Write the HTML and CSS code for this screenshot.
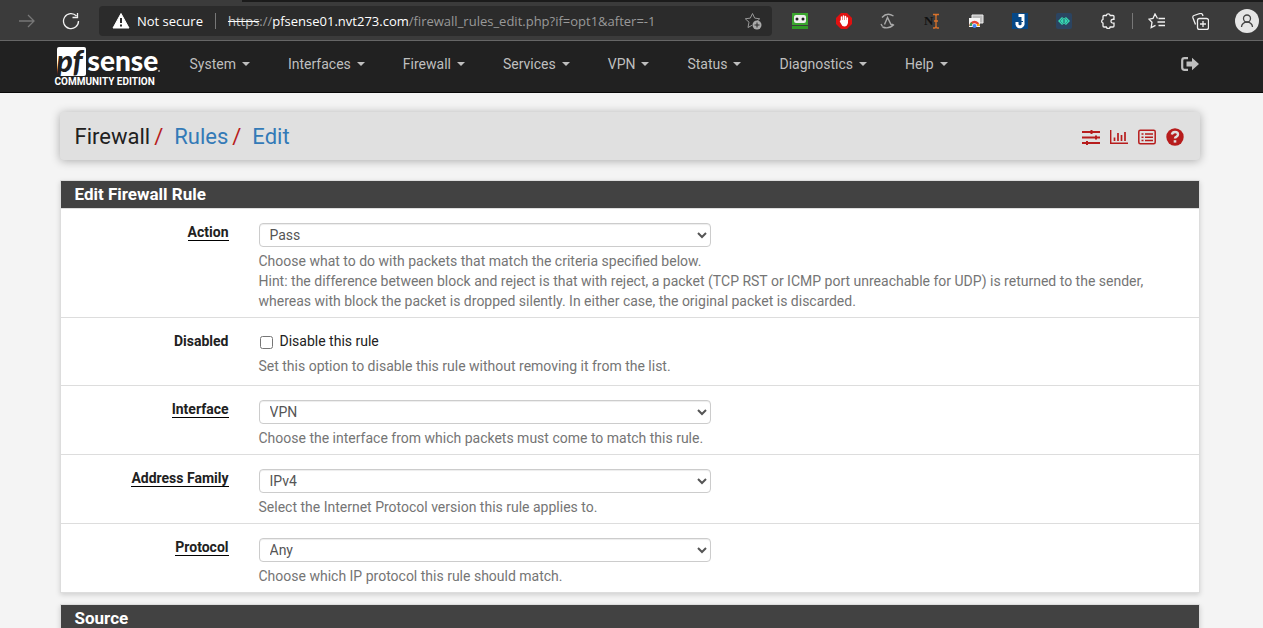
FILE: index.html
```html
<!DOCTYPE html>
<html lang="en">
<head>
<meta charset="utf-8">
<title>Firewall: Rules: Edit</title>
<link rel="stylesheet" href="styles.css">
</head>
<body>
<div class="browser">
  <div class="tab-strip"><span class="tab-edge"></span></div>
  <div class="toolbar">
    <button class="tool" aria-label="Forward"><svg class="ico dim" width="18" height="18" viewBox="0 0 18 18"><path d="M1 9h15M10 3l6 6-6 6"/></svg></button>
    <button class="tool reload" aria-label="Reload"><svg class="ico" width="18" height="18" viewBox="0 0 18 18"><path d="M14.500 4A7.500 7.500 0 1 0 16.500 9M15.500 1v4.500h-5"/></svg></button>
    <div class="address">
      <button class="security"><svg width="18" height="16" viewBox="0 0 18 16"><path d="M9 0.500 17 15H1z" fill="#fff" stroke="#fff" stroke-linejoin="round"/><path d="M9 5v5M9 11.500v2" stroke="#2b2b2b" stroke-width="2"/></svg>Not secure</button>
      <span class="divider"></span>
      <span class="url"><s>https</s>://<b>pfsense01.nvt273.com</b>/firewall_rules_edit.php?if=opt1&amp;after=-1</span>
      <button class="tool fav" aria-label="Add to favorites"><svg width="18" height="18" viewBox="0 0 18 18"><path d="M8.500 1.500l2.200 4.600 5 .7-3.500 3.400.3 1.500M8.500 1.500 6.300 6.100l-5 .7L5 10.200l-1 5.300 4.200-2.300" fill="none" stroke="#999"/><circle cx="13" cy="13" r="4.500" fill="#aaa"/><path d="M10.500 13h5M13 10.500v5" stroke="#2b2b2b"/></svg></button>
    </div>
    <div class="extensions">
      <button class="tool" aria-label="Password manager"><svg width="16" height="16" viewBox="0 0 16 16"><path d="M0 0h16v12H0z" fill="#3aa52e"/><rect x="2" y="2" width="12" height="8" rx="2" fill="#eee"/><circle cx="5" cy="6" r="1.500" fill="#222"/><circle cx="11" cy="6" r="1.500" fill="#222"/><path d="M0 13h16v3H0z" fill="#2f9a25"/></svg></button>
      <button class="tool" aria-label="Ad blocker"><svg width="16" height="16" viewBox="0 0 16 16"><path d="M5 0h6l5 5v6l-5 5H5l-5-5V5z" fill="#e01111"/><path d="M5.500 8V4M7.500 7V3M9.500 7V3.500M11.300 8V5" stroke="#fff" stroke-width="1.500" stroke-linecap="round"/><path d="M4.800 7h7.200v3q-1 3.500-3.500 3.500T5.200 11L3.700 8.500z" fill="#fff"/></svg></button>
      <button class="tool" aria-label="Lambda"><svg width="16" height="16" viewBox="0 0 16 16" fill="none" stroke="#aaa" stroke-width="1.400"><path d="M2 4.500Q7 -1 13.500 3M2.500 14Q9 16.500 14 11.500M4.500 11.500l3-7 3.500 7h2M1 11l1.500 2.500"/></svg></button>
      <button class="tool" aria-label="Text tool"><svg width="16" height="16" viewBox="0 0 16 16"><text x="0" y="12" class="n-mark">N</text><path d="M9 1.500h2.500L12 3v11M15 1.500h-2.500L12 3M9 15h2L12 13.500l1 1.500h2M10 8h4" fill="none" stroke="#d8722b" stroke-width="1.300"/></svg></button>
      <button class="tool" aria-label="Browser windows"><svg width="16" height="16" viewBox="0 0 16 16"><path d="M4 2h11v8H4z" fill="#bbb" stroke="#eee"/><path d="M1 5h11v9H1z" fill="#f5f5f5"/><path d="M2.500 13a4 4 0 0 1 8 0" fill="none" stroke="#e94235" stroke-width="2.500"/><path d="M2.500 13q0-2 1.500-3" stroke="#32a852" stroke-width="2" fill="none"/><path d="M10.500 13q0-1-.6-2" stroke="#fbbc05" stroke-width="2" fill="none"/><circle cx="6.500" cy="13" r="2" fill="#4285f4"/></svg></button>
      <button class="tool" aria-label="J extension"><svg width="16" height="16" viewBox="0 0 16 16"><path d="M0 0h16v16H0z" fill="#064887"/><path d="M6.500 2.500H11v7.500a3 3 0 0 1-6 1.500V9" fill="none" stroke="#fff" stroke-width="3"/><path d="M8.500 6v5M6 8.500h5" stroke="#064887"/></svg></button>
      <button class="tool" aria-label="Diamond extension"><svg width="16" height="16" viewBox="0 0 16 16"><rect width="16" height="16" rx="2" fill="#2b4461"/><path d="M2 8l4-4 2 1.500L10 4l4 4-4 4-2-1.500L6 12z" fill="#36d6b0"/><path d="M4 8l2.500-2.500L9 8l-2.500 2.500zM7 8l2.500-2.500L12 8l-2.500 2.500z" fill="none" stroke="#2b7b80" stroke-width=".7"/></svg></button>
      <button class="tool" aria-label="Extensions"><svg class="ico" width="16" height="16" viewBox="0 0 16 16"><path d="M4 2.500h2.300a2 2 0 0 1 3.900 0H13a1 1 0 0 1 1 1V6.300q-3-.3-3 1.900t3 1.900V13a1 1 0 0 1-1 1h-2.800a2 2 0 0 1-3.900 0H4a1 1 0 0 1-1-1v-2.900a2 2 0 0 1 0-3.800V3.500a1 1 0 0 1 1-1z"/></svg></button>
    </div>
    <span class="divider edge"></span>
    <div class="extensions actions">
      <button class="tool" aria-label="Favorites"><svg class="ico" width="18" height="16" viewBox="0 0 18 16"><path d="M9.500 5.500 7 1 5 5.500l-4 .7 3 3-.8 5.300 4.300-2.200M10.500 5.500H17M9.500 9H17M10.500 12.500H17"/></svg></button>
      <button class="tool" aria-label="Collections"><svg class="ico" width="17" height="17" viewBox="0 0 17 17"><rect x="5.500" y="5.500" width="11" height="11" rx="2"/><path d="M11 8v6M8 11h6M3.500 11.500 1 5q-.6-2 1-2.500l6-2q2-.5 2.700 1.500l.3 1"/></svg></button>
      <button class="profile" aria-label="Profile"><svg width="24" height="24" viewBox="0 0 24 24"><circle cx="12" cy="12" r="12" fill="#e6e6e6"/><g fill="none" stroke="#444" stroke-width="1.300"><circle cx="12" cy="9.500" r="3.500"/><path d="M6.500 18a5.500 5 0 0 1 11 0"/></g></svg></button>
    </div>
  </div>
</div>

<header class="navbar">
  <div class="container nav-inner">
    <a class="brand" href="#" aria-label="pfSense Community Edition">
      <span class="logo"><span class="logo-pf">pf</span><span class="logo-sense">sense</span><span class="logo-dot"></span></span>
      <span class="edition">COMMUNITY EDITION</span>
    </a>
    <nav class="menu">
      <a href="#">System</a>
      <a href="#">Interfaces</a>
      <a href="#">Firewall</a>
      <a href="#">Services</a>
      <a href="#">VPN</a>
      <a href="#">Status</a>
      <a href="#">Diagnostics</a>
      <a href="#">Help</a>
    </nav>
    <a class="logout" href="#" aria-label="Logout"><svg width="18" height="14" viewBox="0 0 18 14"><path d="M7 1.200H3.500a2.300 2.300 0 0 0-2.300 2.300v7a2.300 2.300 0 0 0 2.300 2.300H7" fill="none" stroke="#bfbfbf" stroke-width="2.200"/><path d="M5.500 4.500H11V.8L18 7l-7 6.200V9.500H5.500z" fill="#bfbfbf"/></svg></a>
  </div>
</header>

<main class="container">
  <div class="page-header">
    <ol class="breadcrumb">
      <li>Firewall</li>
      <li><a href="#">Rules</a></li>
      <li><a href="#">Edit</a></li>
    </ol>
    <div class="shortcuts">
      <a href="#" aria-label="Settings"><svg width="18" height="16" viewBox="0 0 18 16" fill="none" stroke="#b71c1c" stroke-width="2"><path d="M0 3h18M0 8.500h18M0 14h18"/><path d="M9.500 1v4M14 6.500v4M5 12v4"/></svg></a>
      <a href="#" aria-label="Status graph"><svg width="18" height="14" viewBox="0 0 18 14" fill="none" stroke="#b71c1c"><path d="M.7 0v13.300H18" stroke-width="1.400"/><path d="M4.500 7.500V11M8 3v8M11.500 5v6M15 2v9" stroke-width="1.700"/></svg></a>
      <a href="#" aria-label="Logs"><svg width="18" height="16" viewBox="0 0 18 16" fill="none" stroke="#b71c1c"><rect x=".8" y="1.300" width="16.400" height="13.400" rx="1.500" stroke-width="1.500"/><path d="M3.500 5h2M7 5h8M3.500 8.200h2M7 8.200h8M3.500 11.500h2M7 11.500h8" stroke-width="1.500"/></svg></a>
      <a href="#" aria-label="Help"><svg width="18" height="18" viewBox="0 0 18 18"><circle cx="9" cy="9" r="8.700" fill="#b71c1c"/><path d="M5.800 6.500Q6.500 4 9 4q3 0 3 2.500 0 1.300-1.500 2.100Q9 9.300 9 10.500" fill="none" stroke="#e0e0e0" stroke-width="2.400"/><path d="M7.700 12.200h2.600v2.400H7.700z" fill="#e0e0e0"/></svg></a>
    </div>
  </div>

  <form>
    <section class="panel">
      <h2>Edit Firewall Rule</h2>
      <div class="row">
        <label class="name" for="action"><span>Action</span></label>
        <div class="field">
          <select id="action"><option>Pass</option></select>
          <p>Choose what to do with packets that match the criteria specified below.<br>Hint: the difference between block and reject is that with reject, a packet (TCP RST or ICMP port unreachable for UDP) is returned to the sender, whereas with block the packet is dropped silently. In either case, the original packet is discarded.</p>
        </div>
      </div>
      <div class="row check-row">
        <span class="name">Disabled</span>
        <div class="field">
          <label class="check"><input type="checkbox">Disable this rule</label>
          <p>Set this option to disable this rule without removing it from the list.</p>
        </div>
      </div>
      <div class="row">
        <label class="name" for="interface"><span>Interface</span></label>
        <div class="field">
          <select id="interface"><option>VPN</option></select>
          <p>Choose the interface from which packets must come to match this rule.</p>
        </div>
      </div>
      <div class="row">
        <label class="name" for="family"><span>Address Family</span></label>
        <div class="field">
          <select id="family"><option>IPv4</option></select>
          <p>Select the Internet Protocol version this rule applies to.</p>
        </div>
      </div>
      <div class="row">
        <label class="name" for="protocol"><span>Protocol</span></label>
        <div class="field">
          <select id="protocol"><option>Any</option></select>
          <p>Choose which IP protocol this rule should match.</p>
        </div>
      </div>
    </section>
    <section class="panel">
      <h2>Source</h2>
    </section>
  </form>
</main>
</body>
</html>
```
FILE: styles.css
```css
* { box-sizing: border-box; }
html { overflow: hidden; }
body {
  margin: 0;
  background: #f4f4f4;
  color: #212121;
  font: 14px/20px Roboto, "Liberation Sans", sans-serif;
}
a { color: #337ab7; text-decoration: none; }
button { border: 0; padding: 0; background: none; color: inherit; font: inherit; }
svg { display: block; }

/* Browser toolbar */
.browser {
  background: #3b3b3b;
  border-bottom: 1px solid #666;
  color: #fff;
  font: 13px/20px "Open Sans", "Liberation Sans", sans-serif;
}
.tab-strip { height: 2px; background: #1b1b1b; }
.tab-edge { display: block; width: 242px; height: 2px; background: #3b3b3b; }
.toolbar { display: flex; align-items: center; height: 38px; padding: 0 4px 0 18px; }
.ico { fill: none; stroke: #f0f0f0; stroke-width: 1.3; }
.dim { stroke: #777; }
.reload { margin: 0 19px 0 26px; }
.address {
  flex: 1;
  display: flex;
  align-items: center;
  height: 30px;
  padding: 0 10px 0 13px;
  border-radius: 4px;
  background: #2b2b2b;
}
.security { display: flex; align-items: center; gap: 7px; }
.divider { width: 1px; height: 16px; margin: 0 12px; background: #777; }
.url { flex: 1; color: #999; white-space: nowrap; }
.url s { color: #ccc; text-decoration-color: #fff; }
.url b { color: #fff; font-weight: 400; }
.extensions { display: flex; align-items: center; gap: 28px; }
.extensions.actions { gap: 26px; }
.address + .extensions { margin-left: 20px; }
.n-mark { font: bold 13px "Liberation Serif", serif; fill: #111; }
.divider.edge { margin: 0 15px 0 16px; }

/* Site navigation */
.container { max-width: 1174px; margin: 0 auto; padding: 0 19px 0 15px; }
.navbar { background: #212121; border-bottom: 1px solid #080808; }
.nav-inner { display: flex; align-items: center; height: 51px; padding-bottom: 5px; }
.brand { display: flex; flex-direction: column; width: 108px; margin: 6px 0 0 -6px; color: #fff; }
.logo { display: flex; height: 29px; margin-left: 3px; }
.logo-pf {
  flex: none;
  width: 29px;
  height: 29px;
  border-radius: 2px;
  background: #fff;
  color: #212121;
  font: italic 900 30px/27px Lato, sans-serif;
}
.logo-sense { margin-left: 2px; font: 900 28px/26px Lato, sans-serif; }
.logo-dot { align-self: flex-end; width: 2px; height: 2px; margin-bottom: 4px; background: #888; }
.edition { padding-left: 1px; font-size: 10px; line-height: 12px; font-weight: 700; white-space: nowrap; }
.menu { display: flex; flex: 1; gap: 38px; margin-left: 28px; }
.menu a { display: flex; align-items: center; gap: 6px; color: #bfbfbf; }
.menu a::after { content: ""; border: 4px solid transparent; border-top-color: #bfbfbf; border-bottom: 0; }
.logout { margin-right: 1px; }

/* Page header */
.page-header {
  display: flex;
  align-items: center;
  justify-content: space-between;
  height: 48px;
  margin: 19px 0 20px;
  padding: 2px 16px 0 15px;
  border-radius: 4px;
  background: #e0e0e0;
  box-shadow: 0 1px 10px rgba(0, 0, 0, .3);
}
.breadcrumb { display: flex; margin: 0; padding: 0; list-style: none; font-size: 22px; line-height: 30px; }
.breadcrumb li + li::before { content: "/"; padding: 0 11px 0 4px; color: #b71c1c; }
.shortcuts { display: flex; align-items: center; gap: 10px; }

/* Form panels */
.panel {
  margin-bottom: 11px;
  border: 1px solid #ddd;
  background: #fff;
  box-shadow: 0 2px 5px rgba(0, 0, 0, .15);
}
.panel h2 {
  margin: 0;
  padding: 0 14px;
  border-bottom: 1px solid #ddd;
  background: #424242;
  color: #fff;
  font-size: 17px;
  line-height: 27px;
  font-weight: 700;
}
.row {
  display: grid;
  grid-template-columns: 168px 1fr;
  column-gap: 30px;
  padding: 13px 15px 6px 0;
}
.row + .row { border-top: 1px solid #ddd; }
.name { text-align: right; font-weight: 700; }
.name span { display: inline-block; line-height: 16px; border-bottom: 1px solid #000; }
.field p { margin: 4px 0 0; color: #757575; }
.field select {
  display: block;
  width: 100%;
  max-width: 452px;
  height: 24px;
  margin-top: 1px;
  padding: 0 6px;
  border: 1px solid #ccc;
  border-radius: 4px;
  background: #fff;
  color: #555;
  font: inherit;
  box-shadow: inset 0 1px 1px rgba(0, 0, 0, .075);
}
.check-row { padding-bottom: 9px; }
.check { display: flex; align-items: center; gap: 7px; }
.check input { width: 13px; height: 13px; margin: 2px 0 0 1px; }
.check-row p { margin-top: 5px; }
```
